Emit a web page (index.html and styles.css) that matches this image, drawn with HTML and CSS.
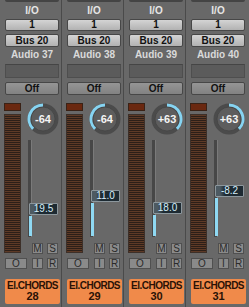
FILE: index.html
```html
<!DOCTYPE html>
<html lang="en">
  <head>
    <meta charset="UTF-8" />
    <meta name="viewport" content="width=device-width, initial-scale=1.0" />
    <title>Mixer</title>
    <link rel="stylesheet" href="styles.css">
  </head>
  <body>
    <div class="mixer">
      <!-- channel 28 -->
      <div class="strip">
        <div class="cap"></div>
        <div class="label">I/O</div>
        <div class="btn light first">1</div>
        <div class="btn light second">Bus 20</div>
        <div class="label name">Audio 37</div>
        <div class="slot"></div>
        <div class="btn off">Off</div>
        <div class="lower">
          <div class="meter-col">
            <div class="clip"></div>
            <div class="meter"></div>
          </div>
          <div class="ctrl-col">
            <div class="knob">
              <svg width="32" height="32" viewBox="0 0 32 32">
                <circle cx="16" cy="16" r="15.5" fill="#4b4b4b" />
                <circle cx="16" cy="16" r="12" fill="#5d5d5d" stroke="#444" stroke-width="0.8" />
                <path d="M16 2 A14 14 0 0 0 6.1 25.9" fill="none" stroke="#86d4f2" stroke-width="3" />
              </svg>
              <span class="knob-val">-64</span>
            </div>
            <div class="fader">
              <div class="track"></div>
              <div class="fill" style="top: 76px"></div>
              <div class="value" style="top: 63px">19.5</div>
            </div>
            <div class="ms-row">
              <div class="sq">M</div>
              <div class="sq">S</div>
            </div>
          </div>
        </div>
        <div class="oir-row">
          <div class="sq wide">O</div>
          <div class="sq">I</div>
          <div class="sq">R</div>
        </div>
        <div class="track-name">El.CHORDS<br><span class="num">28</span></div>
      </div>

      <!-- channel 29 -->
      <div class="strip">
        <div class="cap"></div>
        <div class="label">I/O</div>
        <div class="btn light first">1</div>
        <div class="btn light second">Bus 20</div>
        <div class="label name">Audio 38</div>
        <div class="slot"></div>
        <div class="btn off">Off</div>
        <div class="lower">
          <div class="meter-col">
            <div class="clip"></div>
            <div class="meter"></div>
          </div>
          <div class="ctrl-col">
            <div class="knob">
              <svg width="32" height="32" viewBox="0 0 32 32">
                <circle cx="16" cy="16" r="15.5" fill="#4b4b4b" />
                <circle cx="16" cy="16" r="12" fill="#5d5d5d" stroke="#444" stroke-width="0.8" />
                <path d="M16 2 A14 14 0 0 0 6.1 25.9" fill="none" stroke="#86d4f2" stroke-width="3" />
              </svg>
              <span class="knob-val">-64</span>
            </div>
            <div class="fader">
              <div class="track"></div>
              <div class="fill" style="top: 63px"></div>
              <div class="value" style="top: 50px">11.0</div>
            </div>
            <div class="ms-row">
              <div class="sq">M</div>
              <div class="sq">S</div>
            </div>
          </div>
        </div>
        <div class="oir-row">
          <div class="sq wide">O</div>
          <div class="sq">I</div>
          <div class="sq">R</div>
        </div>
        <div class="track-name">El.CHORDS<br><span class="num">29</span></div>
      </div>

      <!-- channel 30 -->
      <div class="strip">
        <div class="cap"></div>
        <div class="label">I/O</div>
        <div class="btn light first">1</div>
        <div class="btn light second">Bus 20</div>
        <div class="label name">Audio 39</div>
        <div class="slot"></div>
        <div class="btn off">Off</div>
        <div class="lower">
          <div class="meter-col">
            <div class="clip"></div>
            <div class="meter"></div>
          </div>
          <div class="ctrl-col">
            <div class="knob">
              <svg width="32" height="32" viewBox="0 0 32 32">
                <circle cx="16" cy="16" r="15.5" fill="#4b4b4b" />
                <circle cx="16" cy="16" r="12" fill="#5d5d5d" stroke="#444" stroke-width="0.8" />
                <path d="M16 2 A14 14 0 0 1 25.9 25.9" fill="none" stroke="#86d4f2" stroke-width="3" />
              </svg>
              <span class="knob-val">+63</span>
            </div>
            <div class="fader">
              <div class="track"></div>
              <div class="fill" style="top: 75px"></div>
              <div class="value" style="top: 62px">18.0</div>
            </div>
            <div class="ms-row">
              <div class="sq">M</div>
              <div class="sq">S</div>
            </div>
          </div>
        </div>
        <div class="oir-row">
          <div class="sq wide">O</div>
          <div class="sq">I</div>
          <div class="sq">R</div>
        </div>
        <div class="track-name">El.CHORDS<br><span class="num">30</span></div>
      </div>

      <!-- channel 31 -->
      <div class="strip">
        <div class="cap"></div>
        <div class="label">I/O</div>
        <div class="btn light first">1</div>
        <div class="btn light second">Bus 20</div>
        <div class="label name">Audio 40</div>
        <div class="slot"></div>
        <div class="btn off">Off</div>
        <div class="lower">
          <div class="meter-col">
            <div class="clip"></div>
            <div class="meter"></div>
          </div>
          <div class="ctrl-col">
            <div class="knob">
              <svg width="32" height="32" viewBox="0 0 32 32">
                <circle cx="16" cy="16" r="15.5" fill="#4b4b4b" />
                <circle cx="16" cy="16" r="12" fill="#5d5d5d" stroke="#444" stroke-width="0.8" />
                <path d="M16 2 A14 14 0 0 1 25.9 25.9" fill="none" stroke="#86d4f2" stroke-width="3" />
              </svg>
              <span class="knob-val">+63</span>
            </div>
            <div class="fader">
              <div class="track"></div>
              <div class="fill" style="top: 58px"></div>
              <div class="value" style="top: 45px">-8.2</div>
            </div>
            <div class="ms-row">
              <div class="sq">M</div>
              <div class="sq">S</div>
            </div>
          </div>
        </div>
        <div class="oir-row">
          <div class="sq wide">O</div>
          <div class="sq">I</div>
          <div class="sq">R</div>
        </div>
        <div class="track-name">El.CHORDS<br><span class="num">31</span></div>
      </div>
    </div>
  </body>
</html>
```

FILE: styles.css
```css
* {
  box-sizing: border-box;
}

body {
  margin: 0;
  background: #686868;
  font-family: "Liberation Sans", Arial, sans-serif;
}

.mixer {
  display: flex;
  width: 249px;
  height: 307px;
  overflow: hidden;
}

.strip {
  width: 62px;
  height: 307px;
  padding-left: 4px;
  display: flex;
  flex-direction: column;
  border-right: 1px solid #4a4a4a;
  background: #686868;
}

.strip:last-child {
  width: 63px;
  border-right: none;
}

.cap {
  width: 54px;
  height: 2px;
  margin-left: 1px;
  background: #444;
  border-radius: 0 0 2px 2px;
}

.label {
  height: 11px;
  margin-top: 3px;
  line-height: 11px;
  text-align: center;
  font-size: 10px;
  font-weight: bold;
  color: #e6e6e6;
  width: 56px;
}

.label.name {
  height: 13px;
  line-height: 13px;
  margin-top: 1px;
  color: #dadada;
}

.btn {
  width: 54px;
  margin-left: 1px;
  text-align: center;
  font-size: 10px;
  color: #111;
  border: 1px solid #474747;
  border-radius: 2px;
}

.btn.light {
  background: linear-gradient(#d4d4d4, #b2b2b2);
}

.btn.first {
  height: 12px;
  line-height: 10px;
  margin-top: 3px;
  font-weight: bold;
}

.btn.second {
  height: 13px;
  line-height: 11px;
  margin-top: 3px;
  font-weight: bold;
}

.slot {
  width: 54px;
  height: 14px;
  margin: 3px 0 0 1px;
  background: #5b5b5b;
  border: 1px solid #4e4e4e;
  border-top-color: #454545;
}

.btn.off {
  height: 13px;
  line-height: 11px;
  margin-top: 4px;
  background: linear-gradient(#959595, #828282);
  font-weight: bold;
}

.lower {
  display: flex;
  gap: 6px;
}

.meter-col {
  width: 17px;
  display: flex;
  flex-direction: column;
}

.clip {
  height: 8px;
  margin-top: 8px;
  background: #6a2810;
  border: 1px solid #3a2216;
}

.meter {
  height: 139px;
  margin-top: 3px;
  border: 1px solid #3d3029;
  background: repeating-linear-gradient(to bottom, #5e3a26 0 1px, #2c1f18 1px 2px);
}

.ctrl-col {
  width: 33px;
  display: flex;
  flex-direction: column;
}

.knob {
  position: relative;
  width: 32px;
  height: 32px;
  margin-top: 8px;
}

.knob svg {
  display: block;
}

.knob-val {
  position: absolute;
  left: 0;
  top: 0;
  width: 32px;
  line-height: 32px;
  text-align: center;
  font-size: 11px;
  font-weight: bold;
  color: #f4f4f4;
}

.fader {
  position: relative;
  height: 97px;
  margin-top: 5px;
}

.track {
  position: absolute;
  left: 1px;
  top: 0;
  bottom: 0;
  width: 4px;
  background: #474747;
  border-right: 1px solid #7a7a7a;
}

.fill {
  position: absolute;
  left: 2px;
  bottom: 1px;
  width: 3px;
  background: #8fd9f3;
}

.value {
  position: absolute;
  left: 2px;
  width: 29px;
  height: 12px;
  line-height: 10px;
  text-align: center;
  font-size: 10px;
  color: #d6eefa;
  background: linear-gradient(to right, #4d5a62 0 4px, #1d2a32 9px);
  border: 1px solid #8c979d;
  border-radius: 1px;
}

.ms-row {
  display: flex;
  gap: 4px;
  padding-left: 5px;
  margin-top: 6px;
}

.sq {
  width: 11px;
  height: 11px;
  line-height: 9px;
  text-align: center;
  font-size: 10px;
  color: #2a2a2a;
  background: #8a8a8a;
  border: 1px solid #505050;
}

.oir-row {
  display: flex;
  gap: 4px;
  margin: 4px 0 0 1px;
}

.sq.wide {
  width: 22px;
  margin-right: 1px;
}

.track-name {
  width: 55px;
  height: 25px;
  margin: 10px 0 0 1px;
  padding-top: 1px;
  background: #f08a4a;
  border-radius: 2px;
  text-align: center;
  font-size: 10px;
  letter-spacing: -0.5px;
  line-height: 11px;
  font-weight: bold;
  color: #2a1206;
  white-space: nowrap;
}

.track-name .num {
  font-size: 11px;
  letter-spacing: 0;
}
```
